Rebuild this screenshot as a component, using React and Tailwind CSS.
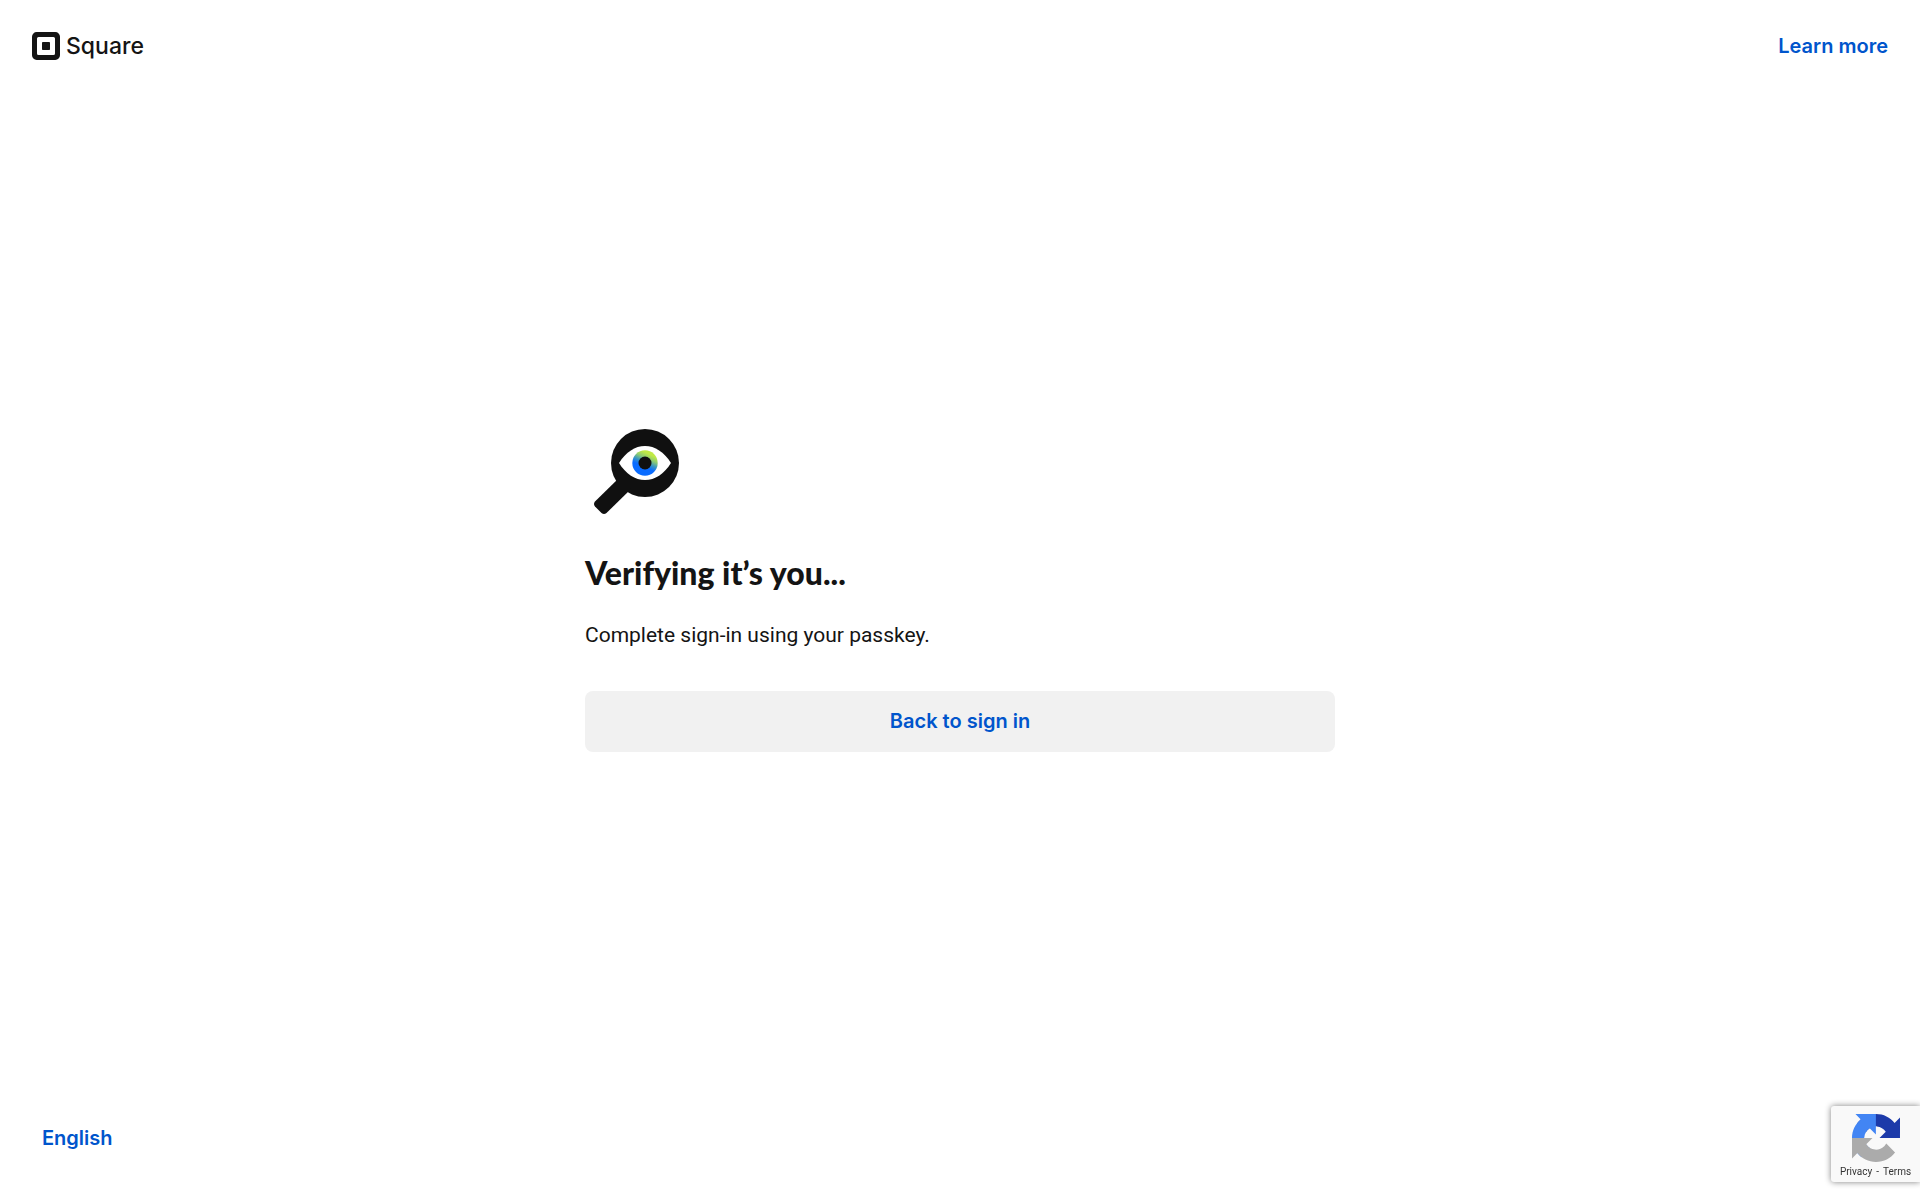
function SquareLogo() {
  return (
    <a href="#" className="flex items-center gap-1.5 text-[#141414]">
      <svg viewBox="0 0 28 28" className="w-7 h-7" aria-hidden="true">
        <path
          fill="currentColor"
          fillRule="evenodd"
          d="M4.7 0h18.6A4.7 4.7 0 0 1 28 4.7v18.6a4.7 4.7 0 0 1-4.7 4.7H4.7A4.7 4.7 0 0 1 0 23.3V4.7A4.7 4.7 0 0 1 4.7 0Zm1.8 5A1.5 1.5 0 0 0 5 6.5v15A1.5 1.5 0 0 0 6.5 23h15a1.5 1.5 0 0 0 1.5-1.5v-15A1.5 1.5 0 0 0 21.5 5h-15Z"
        />
        <rect x="10" y="10" width="8" height="8" rx="0.8" fill="currentColor" />
      </svg>
      <span className="text-[23px] leading-8 font-medium">Square</span>
    </a>
  );
}

function MagnifierEye() {
  return (
    <svg viewBox="0 0 120 120" className="w-[120px] h-[120px]" aria-hidden="true">
      <defs>
        <linearGradient id="iris" x1="0.75" y1="0.05" x2="0.4" y2="0.8">
          <stop offset="0.15" stopColor="#c0ea45" />
          <stop offset="0.38" stopColor="#8ccb72" />
          <stop offset="0.6" stopColor="#3795c4" />
          <stop offset="0.8" stopColor="#0a6cff" />
        </linearGradient>
      </defs>
      <circle cx="60" cy="52" r="34" fill="#101010" />
      <path d="M35 66 10 90.5Q8 93 10 95.5L16.5 102Q19 104 21.5 102L46 78Z" fill="#101010" />
      <path d="M34 52C41 41 50 35 60 35S79 41 86 52C79 63 70 69 60 69S41 63 34 52Z" fill="#fff" />
      <circle cx="60" cy="52" r="12.7" fill="url(#iris)" />
      <circle cx="60" cy="52" r="6.5" fill="#101010" />
    </svg>
  );
}

function RecaptchaBadge() {
  return (
    <aside className="fixed right-0 bottom-[18px] w-[89px] h-[76px] pt-2 flex flex-col items-center rounded-l-[3px] bg-[#f9f9f9] shadow-[0_0_6px_#808080]">
      <svg viewBox="0 0 64 64" className="w-12 h-12 shrink-0" aria-hidden="true">
        <path fill="#1c3aa9" d="M64 31.955l-.033-1.37V4.687l-7.16 7.16C50.948 4.674 42.033.093 32.05.093c-10.4 0-19.622 4.96-25.458 12.64l11.736 11.86a15.55 15.55 0 0 1 4.754-5.334c2.05-1.6 4.952-2.906 8.968-2.906.485 0 .86.057 1.135.163 4.976.393 9.288 3.14 11.828 7.124l-8.307 8.307L64 31.953" />
        <path fill="#4285f4" d="M31.862.094l-1.37.033H4.594l7.16 7.16C4.58 13.147 0 22.06 0 32.046c0 10.4 4.96 19.622 12.64 25.458L24.5 45.768a15.55 15.55 0 0 1-5.334-4.754c-1.6-2.05-2.906-4.952-2.906-8.968 0-.485.057-.86.163-1.135.393-4.976 3.14-9.288 7.124-11.828l8.307 8.307L31.86.095" />
        <path fill="#ababab" d="M.001 32.045l.033 1.37v25.898l7.16-7.16c5.86 7.173 14.774 11.754 24.76 11.754 10.4 0 19.622-4.96 25.458-12.64l-11.736-11.86a15.55 15.55 0 0 1-4.754 5.334c-2.05 1.6-4.952 2.906-8.968 2.906-.485 0-.86-.057-1.135-.163-4.976-.393-9.288-3.14-11.828-7.124l8.307-8.307c-10.522.04-22.4.066-27.295-.005" />
      </svg>
      <div className="mt-1 flex gap-1 font-['Roboto',sans-serif] text-[10px] leading-3 text-[#333]">
        <a href="#">Privacy</a>
        <span>-</span>
        <a href="#">Terms</a>
      </div>
    </aside>
  );
}

export default function App() {
  return (
    <div className="min-h-screen flex flex-col bg-white font-['Inter',sans-serif] text-[#141414]">
      <header className="flex items-center justify-between px-8 pt-[30px]">
        <SquareLogo />
        <a href="#" className="text-xl leading-7 font-semibold text-[#0055cc]">Learn more</a>
      </header>

      <main className="flex-1 flex flex-col justify-center px-8 pb-6">
        <div className="w-full max-w-[750px] mx-auto">
          <MagnifierEye />
          <h1 className="mt-[22px] font-['Lato',sans-serif] text-[32px] leading-10 font-black">Verifying it’s you...</h1>
          <p className="mt-7 font-['Roboto',sans-serif] text-[21px] leading-7">Complete sign-in using your passkey.</p>
          <button type="button" className="mt-[42px] w-full h-[61px] rounded-lg bg-[#f1f1f1] text-xl font-semibold text-[#0055cc]">
            Back to sign in
          </button>
        </div>
      </main>

      <footer className="px-[42px] pb-12">
        <button type="button" className="text-xl leading-7 font-semibold text-[#0055cc]">English</button>
      </footer>

      <RecaptchaBadge />
    </div>
  );
}
